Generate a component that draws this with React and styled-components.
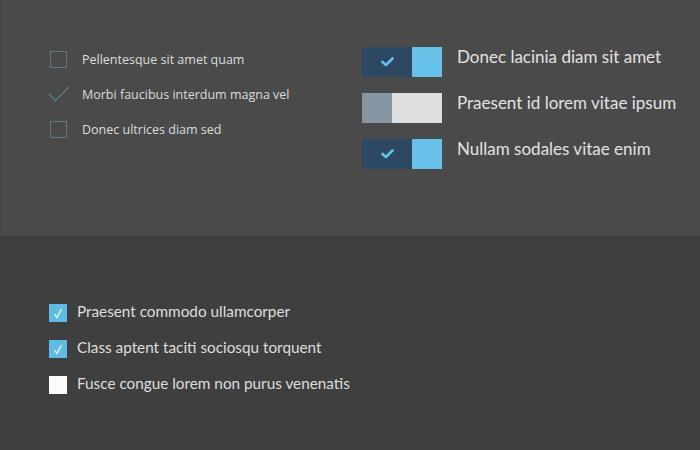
import React from 'react'
import styled, { createGlobalStyle } from 'styled-components'

const Global = createGlobalStyle`
  html, body {
    margin: 0;
    padding: 0;
    background: #3f3f3f;
  }
`

const Page = styled.div`
  width: 700px;
  height: 450px;
  display: flex;
  flex-direction: column;
  background: #3f3f3f;
  overflow: hidden;
`

const TopPanel = styled.section`
  height: 236px;
  box-sizing: border-box;
  background: #4a4a4a;
  border-left: 1px solid #424242;
  padding: 47px 0 0 49px;
  display: flex;
`

const BottomPanel = styled.section`
  flex: 1;
  padding: 68px 0 0 49px;
`

const CheckList = styled.ul`
  list-style: none;
  margin: 3px 0 0;
  padding: 0;
  width: 312px;
  display: flex;
  flex-direction: column;
  gap: 17px;
`

const CheckRow = styled.li`
  height: 18px;
  display: flex;
  align-items: center;
  gap: 15px;
  font-family: "Open Sans", sans-serif;
  font-size: 12.5px;
  color: #dcdcdc;
`

const OutlineBox = styled.span`
  width: 17px;
  height: 17px;
  box-sizing: border-box;
  border: 1px solid #5b7a84;
  flex-shrink: 0;
`

const TickMark = styled.svg`
  width: 22px;
  height: 16px;
  margin: 0 -3px 0 -2px;
  flex-shrink: 0;
`

const ToggleList = styled.ul`
  list-style: none;
  margin: 0;
  padding: 0;
  display: flex;
  flex-direction: column;
  gap: 16px;
`

const ToggleRow = styled.li`
  height: 30px;
  display: flex;
  align-items: flex-start;
  gap: 15px;
  font-family: "Lato", sans-serif;
  font-size: 17px;
  line-height: 20px;
  color: #e2e2e2;
`

const Toggle = styled.span`
  width: 80px;
  height: 30px;
  display: flex;
  flex-shrink: 0;
  background: ${({ on }) => (on ? '#2d4863' : '#dedede')};
  flex-direction: ${({ on }) => (on ? 'row' : 'row-reverse')};
`

const ToggleTrack = styled.span`
  flex: 1;
  display: flex;
  align-items: center;
  justify-content: center;
`

const ToggleKnob = styled.span`
  width: 30px;
  height: 30px;
  background: ${({ on }) => (on ? '#68c1e8' : '#8796a3')};
`

const BoxList = styled.ul`
  list-style: none;
  margin: 0;
  padding: 0;
  display: flex;
  flex-direction: column;
  gap: 18px;
`

const BoxRow = styled.li`
  height: 18px;
  display: flex;
  align-items: flex-start;
  gap: 10px;
  font-family: "Lato", sans-serif;
  font-size: 15.3px;
  line-height: 14px;
  color: #dedede;
`

const FilledBox = styled.span`
  width: 18px;
  height: 18px;
  flex-shrink: 0;
  display: flex;
  align-items: center;
  justify-content: center;
  background: ${({ checked }) => (checked ? '#5dbbe4' : '#fbfbfb')};
`

const plainItems = [
  { label: 'Pellentesque sit amet quam', checked: false },
  { label: 'Morbi faucibus interdum magna vel', checked: true },
  { label: 'Donec ultrices diam sed', checked: false },
]

const toggles = [
  { label: 'Donec lacinia diam sit amet', on: true },
  { label: 'Praesent id lorem vitae ipsum', on: false },
  { label: 'Nullam sodales vitae enim', on: true },
]

const boxes = [
  { label: 'Praesent commodo ullamcorper', checked: true },
  { label: 'Class aptent taciti sociosqu torquent', checked: true },
  { label: 'Fusce congue lorem non purus venenatis', checked: false },
]

const App = () => {
  return (
    <Page>
      <Global />
      <TopPanel>
        <CheckList>
          {plainItems.map((item) => (
            <CheckRow key={item.label}>
              {item.checked ? (
                <TickMark viewBox="0 0 22 16">
                  <polyline points="1,8 7.5,14.5 21,1" fill="none" stroke="#5b7a84" strokeWidth="1.3" />
                </TickMark>
              ) : (
                <OutlineBox />
              )}
              {item.label}
            </CheckRow>
          ))}
        </CheckList>
        <ToggleList>
          {toggles.map((t) => (
            <ToggleRow key={t.label}>
              <Toggle on={t.on}>
                <ToggleTrack>
                  {t.on && (
                    <svg width="13" height="10" viewBox="0 0 13 10">
                      <polyline points="1.5,5 5,8 11.5,1.5" fill="none" stroke="#68c1e8" strokeWidth="2.6" strokeLinecap="round" strokeLinejoin="round" />
                    </svg>
                  )}
                </ToggleTrack>
                <ToggleKnob on={t.on} />
              </Toggle>
              {t.label}
            </ToggleRow>
          ))}
        </ToggleList>
      </TopPanel>
      <BottomPanel>
        <BoxList>
          {boxes.map((b) => (
            <BoxRow key={b.label}>
              <FilledBox checked={b.checked}>
                {b.checked && (
                  <svg width="10" height="11" viewBox="0 0 10 11">
                    <polyline points="1.5,6 4,9.5 8.5,1" fill="none" stroke="#ffffff" strokeWidth="1.2" />
                  </svg>
                )}
              </FilledBox>
              {b.label}
            </BoxRow>
          ))}
        </BoxList>
      </BottomPanel>
    </Page>
  )
}

export default App
